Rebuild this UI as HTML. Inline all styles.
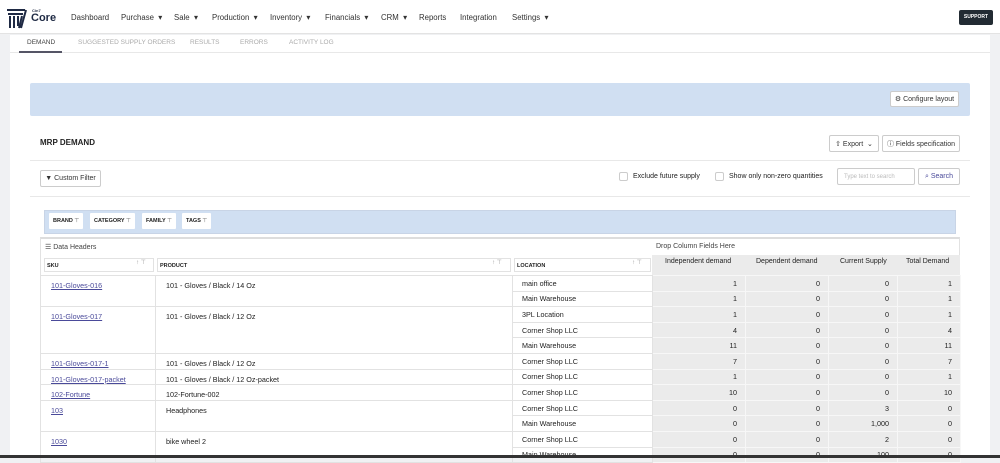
<!DOCTYPE html>
<html><head><style>
*{box-sizing:border-box;margin:0;padding:0}
body{width:1000px;height:458px;overflow:hidden;background:#f0f1f3;font-family:"Liberation Sans",Arial,sans-serif;position:relative;color:#222}
.a{position:absolute}
#top{left:0;top:0;width:1000px;height:34px;background:#fff;border-bottom:1px solid #e3e3e3}
.nav{font-size:7.8px;color:#333;top:13px}
#main{left:10px;top:35px;width:980px;height:423px;background:#fff}
.tab{font-size:6.5px;color:#aaa;top:39px}
.btn{background:#fff;border:1px solid #ccc;border-radius:2px;font-size:7px;color:#333;display:flex;align-items:center;justify-content:center}
table{border-collapse:collapse;font-size:7.2px;table-layout:fixed}
td{height:15.6px;border:1px solid #e2e2e2;padding:0 6px;vertical-align:top;padding-top:5px;white-space:nowrap}
td.n{background:#ebebeb;text-align:right;border-color:#f7f7f7;padding-right:8px;vertical-align:middle;padding-top:0}
td.l{vertical-align:middle;padding-top:0;padding-left:9px}
a{color:#4a4a9a;text-decoration:underline}
.hd{font-size:5.5px;font-weight:bold}
.chip{top:213px;height:16px;background:#fff;font-size:5.5px;font-weight:bold;padding:5px 4px;border-radius:1px}
</style></head><body>
<div id="top" class="a"></div>
<svg class="a" style="left:6px;top:7px" width="22" height="22" viewBox="0 0 22 22"><g stroke="#1f2a44" stroke-width="2" fill="none"><path d="M1 3h18M2 7h15"/><path d="M4 9v12M8 9v12M12 9v10M16 9l-3 12M20 3l-5 18"/></g></svg>
<div class="a" style="left:32px;top:8px;font-size:4px;font-weight:bold;color:#1f2a44">Cin7</div>
<div class="a" style="left:31px;top:12px;font-size:11px;font-weight:bold;color:#1f2a44">Core</div>
<div class="a nav" style="left:71px">Dashboard</div>
<div class="a nav" style="left:121px">Purchase &nbsp;▾</div>
<div class="a nav" style="left:174px">Sale &nbsp;▾</div>
<div class="a nav" style="left:212px">Production &nbsp;▾</div>
<div class="a nav" style="left:270px">Inventory &nbsp;▾</div>
<div class="a nav" style="left:325px">Financials &nbsp;▾</div>
<div class="a nav" style="left:381px">CRM &nbsp;▾</div>
<div class="a nav" style="left:419px">Reports</div>
<div class="a nav" style="left:460px">Integration</div>
<div class="a nav" style="left:512px">Settings &nbsp;▾</div>
<div class="a" style="left:959px;top:10px;width:34px;height:15px;background:#222b33;border-radius:2px;color:#fff;font-size:5px;font-weight:bold;text-align:center;line-height:15px">SUPPORT</div>
<div id="main" class="a"></div>
<div class="a" style="left:10px;top:52px;width:980px;border-top:1px solid #e8e8e8"></div>
<div class="a tab" style="left:27px;color:#444">DEMAND</div>
<div class="a" style="left:19px;top:51px;width:43px;height:2px;background:#556"></div>
<div class="a tab" style="left:78px">SUGGESTED SUPPLY ORDERS</div>
<div class="a tab" style="left:190px">RESULTS</div>
<div class="a tab" style="left:240px">ERRORS</div>
<div class="a tab" style="left:289px">ACTIVITY LOG</div>
<div class="a" style="left:30px;top:83px;width:940px;height:33px;background:#d0dff2;border-radius:2px"></div>
<div class="a btn" style="left:890px;top:91px;width:69px;height:16px">⚙ Configure layout</div>
<div class="a" style="left:40px;top:138px;font-size:8px;font-weight:bold">MRP DEMAND</div>
<div class="a btn" style="left:829px;top:135px;width:50px;height:17px">⇧ Export &nbsp;⌄</div>
<div class="a btn" style="left:882px;top:135px;width:78px;height:17px">ⓘ Fields specification</div>
<div class="a" style="left:30px;top:160px;width:940px;border-top:1px solid #e8e8e8"></div>
<div class="a btn" style="left:40px;top:170px;width:61px;height:17px">▼ Custom Filter</div>
<div class="a" style="left:619px;top:172px;width:9px;height:9px;border:1px solid #ccc;border-radius:2px"></div>
<div class="a" style="left:633px;top:173px;font-size:7px">Exclude future supply</div>
<div class="a" style="left:715px;top:172px;width:9px;height:9px;border:1px solid #ccc;border-radius:2px"></div>
<div class="a" style="left:729px;top:173px;font-size:7px">Show only non-zero quantities</div>
<div class="a btn" style="left:837px;top:168px;width:78px;height:17px;justify-content:flex-start;padding-left:6px;color:#bbb;font-size:6px">Type text to search</div>
<div class="a btn" style="left:918px;top:168px;width:42px;height:17px;color:#4a4a9a">⌕ Search</div>
<div class="a" style="left:30px;top:196px;width:940px;border-top:1px solid #e8e8e8"></div>
<div class="a" style="left:44px;top:210px;width:912px;height:24px;background:#d0dff2;border:1px solid #c8d4e6"></div>
<div class="a chip" style="left:49px">BRAND <span style="color:#999">⊤</span></div>
<div class="a chip" style="left:90px">CATEGORY <span style="color:#999">⊤</span></div>
<div class="a chip" style="left:142px">FAMILY <span style="color:#999">⊤</span></div>
<div class="a chip" style="left:182px">TAGS <span style="color:#999">⊤</span></div>
<div class="a" style="left:40px;top:237px;width:920px;height:221px;border:1px solid #e2e2e2;border-top:2px solid #ddd"></div>
<div class="a" style="left:45px;top:243px;font-size:7px;color:#444">☰ Data Headers</div>
<div class="a" style="left:656px;top:243px;font-size:7px;color:#444">Drop Column Fields Here</div>
<div class="a" style="left:652px;top:255px;width:308px;height:20px;background:#ebebeb"></div>
<div class="a" style="left:44px;top:258px;width:110px;height:14px;border:1px solid #e2e2e2"></div>
<div class="a hd" style="left:47px;top:263px">SKU</div><div class="a" style="left:136px;top:259px;font-size:6px;color:#999">↑ ⊤</div>
<div class="a" style="left:157px;top:258px;width:354px;height:14px;border:1px solid #e2e2e2"></div>
<div class="a hd" style="left:160px;top:263px">PRODUCT</div><div class="a" style="left:492px;top:259px;font-size:6px;color:#999">↑ ⊤</div>
<div class="a" style="left:514px;top:258px;width:137px;height:14px;border:1px solid #e2e2e2"></div>
<div class="a hd" style="left:517px;top:263px">LOCATION</div><div class="a" style="left:632px;top:259px;font-size:6px;color:#999">↑ ⊤</div>
<div class="a" style="left:665px;top:258px;font-size:7px">Independent demand</div>
<div class="a" style="left:756px;top:258px;font-size:7px">Dependent demand</div>
<div class="a" style="left:840px;top:258px;font-size:7px">Current Supply</div>
<div class="a" style="left:906px;top:258px;font-size:7px">Total Demand</div>
<table class="a" style="left:40px;top:275px;width:920px">
<colgroup><col style="width:115px"><col style="width:357px"><col style="width:140px"><col style="width:93px"><col style="width:83px"><col style="width:69px"><col style="width:63px"></colgroup>
<tr><td rowspan="2" style="padding-left:10px"><a>101-Gloves-016</a></td><td rowspan="2" style="padding-left:10px">101 - Gloves / Black / 14 Oz</td><td class="l">main office</td><td class="n">1</td><td class="n">0</td><td class="n">0</td><td class="n">1</td></tr>
<tr><td class="l">Main Warehouse</td><td class="n">1</td><td class="n">0</td><td class="n">0</td><td class="n">1</td></tr>
<tr><td rowspan="3" style="padding-left:10px"><a>101-Gloves-017</a></td><td rowspan="3" style="padding-left:10px">101 - Gloves / Black / 12 Oz</td><td class="l">3PL Location</td><td class="n">1</td><td class="n">0</td><td class="n">0</td><td class="n">1</td></tr>
<tr><td class="l">Corner Shop LLC</td><td class="n">4</td><td class="n">0</td><td class="n">0</td><td class="n">4</td></tr>
<tr><td class="l">Main Warehouse</td><td class="n">11</td><td class="n">0</td><td class="n">0</td><td class="n">11</td></tr>
<tr><td style="padding-left:10px"><a>101-Gloves-017-1</a></td><td style="padding-left:10px">101 - Gloves / Black / 12 Oz</td><td class="l">Corner Shop LLC</td><td class="n">7</td><td class="n">0</td><td class="n">0</td><td class="n">7</td></tr>
<tr><td style="padding-left:10px"><a>101-Gloves-017-packet</a></td><td style="padding-left:10px">101 - Gloves / Black / 12 Oz-packet</td><td class="l">Corner Shop LLC</td><td class="n">1</td><td class="n">0</td><td class="n">0</td><td class="n">1</td></tr>
<tr><td style="padding-left:10px"><a>102-Fortune</a></td><td style="padding-left:10px">102-Fortune-002</td><td class="l">Corner Shop LLC</td><td class="n">10</td><td class="n">0</td><td class="n">0</td><td class="n">10</td></tr>
<tr><td rowspan="2" style="padding-left:10px"><a>103</a></td><td rowspan="2" style="padding-left:10px">Headphones</td><td class="l">Corner Shop LLC</td><td class="n">0</td><td class="n">0</td><td class="n">3</td><td class="n">0</td></tr>
<tr><td class="l">Main Warehouse</td><td class="n">0</td><td class="n">0</td><td class="n">1,000</td><td class="n">0</td></tr>
<tr><td rowspan="2" style="padding-left:10px"><a>1030</a></td><td rowspan="2" style="padding-left:10px">bike wheel 2</td><td class="l">Corner Shop LLC</td><td class="n">0</td><td class="n">0</td><td class="n">2</td><td class="n">0</td></tr>
<tr><td class="l">Main Warehouse</td><td class="n">0</td><td class="n">0</td><td class="n">100</td><td class="n">0</td></tr>
</table>
<div class="a" style="left:0;top:455px;width:1000px;height:3px;background:#333"></div>
</body></html>
